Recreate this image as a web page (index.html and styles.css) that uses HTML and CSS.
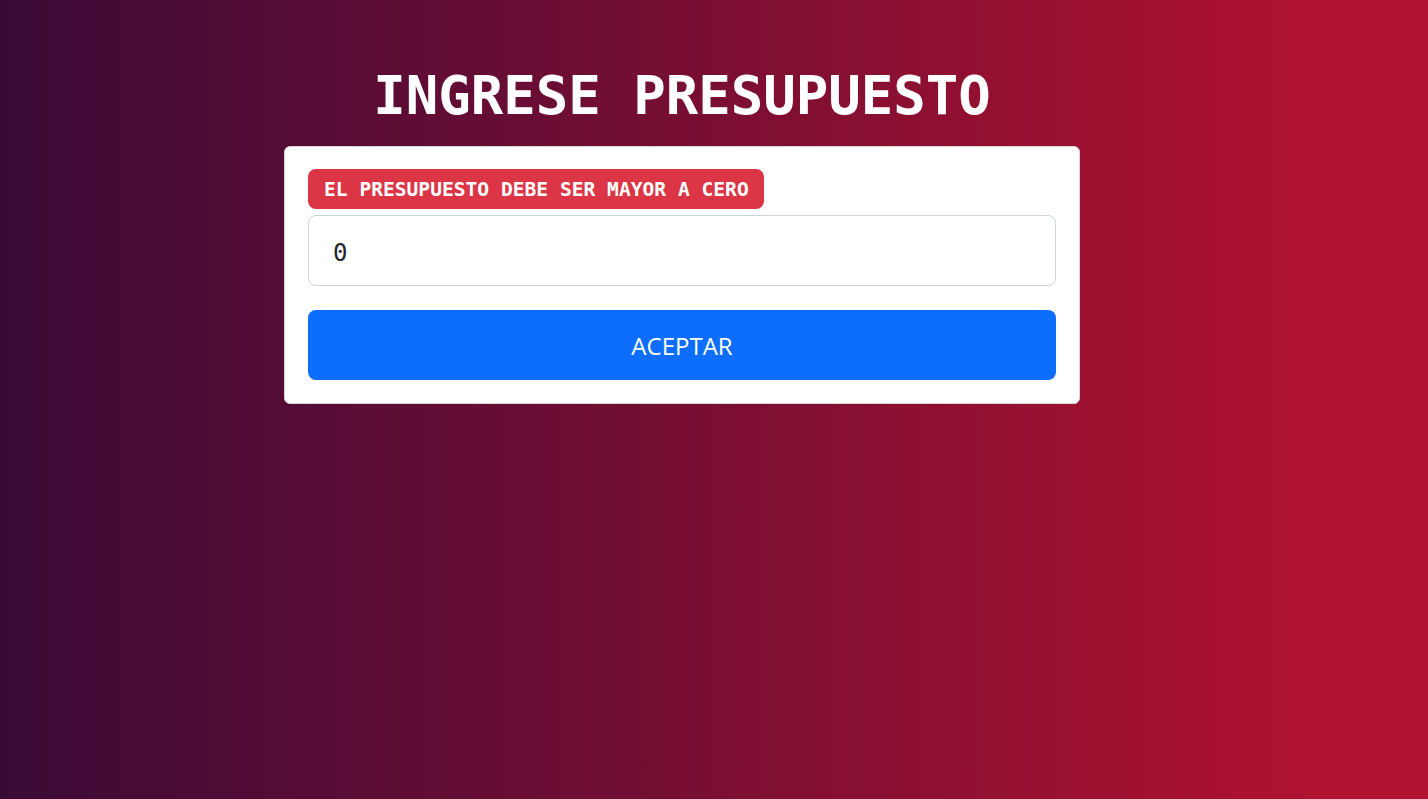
FILE: index.html
```html
<!DOCTYPE html>
<html lang="es">
<head>
<meta charset="utf-8">
<title>Presupuesto</title>
<link rel="stylesheet" href="styles.css">
</head>
<body>
<main class="page">
  <h1 class="title">INGRESE PRESUPUESTO</h1>
  <form class="card">
    <div class="alert">EL PRESUPUESTO DEBE SER MAYOR A CERO</div>
    <input class="field" type="text" value="0">
    <button class="btn" type="button">ACEPTAR</button>
  </form>
</main>
</body>
</html>
```
FILE: styles.css
```css
html, body {
  margin: 0;
  padding: 0;
}
body {
  min-height: 100vh;
  background: linear-gradient(90deg, #3a0a37 0%, #b0122f 92%, #b0122f 100%);
  font-family: "DejaVu Sans Mono", monospace;
}
.page {
  display: flex;
  flex-direction: column;
  align-items: center;
  padding-top: 64px;
  padding-right: 64px;
}
.title {
  margin: 0 0 18px 0;
  color: #fff;
  font-size: 54px;
  font-weight: bold;
  line-height: 64px;
  letter-spacing: 0;
}
.card {
  box-sizing: border-box;
  width: 796px;
  background: #fff;
  border: 1px solid #d6d6d6;
  border-radius: 6px;
  padding: 22px 23px 23px 23px;
  display: flex;
  flex-direction: column;
}
.alert {
  align-self: flex-start;
  box-sizing: border-box;
  height: 40px;
  padding: 0 15px 0 16px;
  display: flex;
  align-items: center;
  background: #dc3545;
  color: #fff;
  border-radius: 8px;
  font-weight: bold;
  font-size: 19.6px;
}
.field {
  box-sizing: border-box;
  margin-top: 6px;
  height: 71px;
  width: 100%;
  border: 1px solid #ced4da;
  border-radius: 8px;
  padding: 4px 24px 0 24px;
  font-family: "DejaVu Sans Mono", monospace;
  font-size: 24px;
  color: #212529;
  background: #fff;
  outline: none;
}
.btn {
  margin-top: 24px;
  height: 70px;
  width: 100%;
  border: none;
  border-radius: 8px;
  background: #0d6efd;
  color: #fff;
  font-family: "Open Sans", sans-serif;
  font-size: 24px;
  cursor: pointer;
}
```
